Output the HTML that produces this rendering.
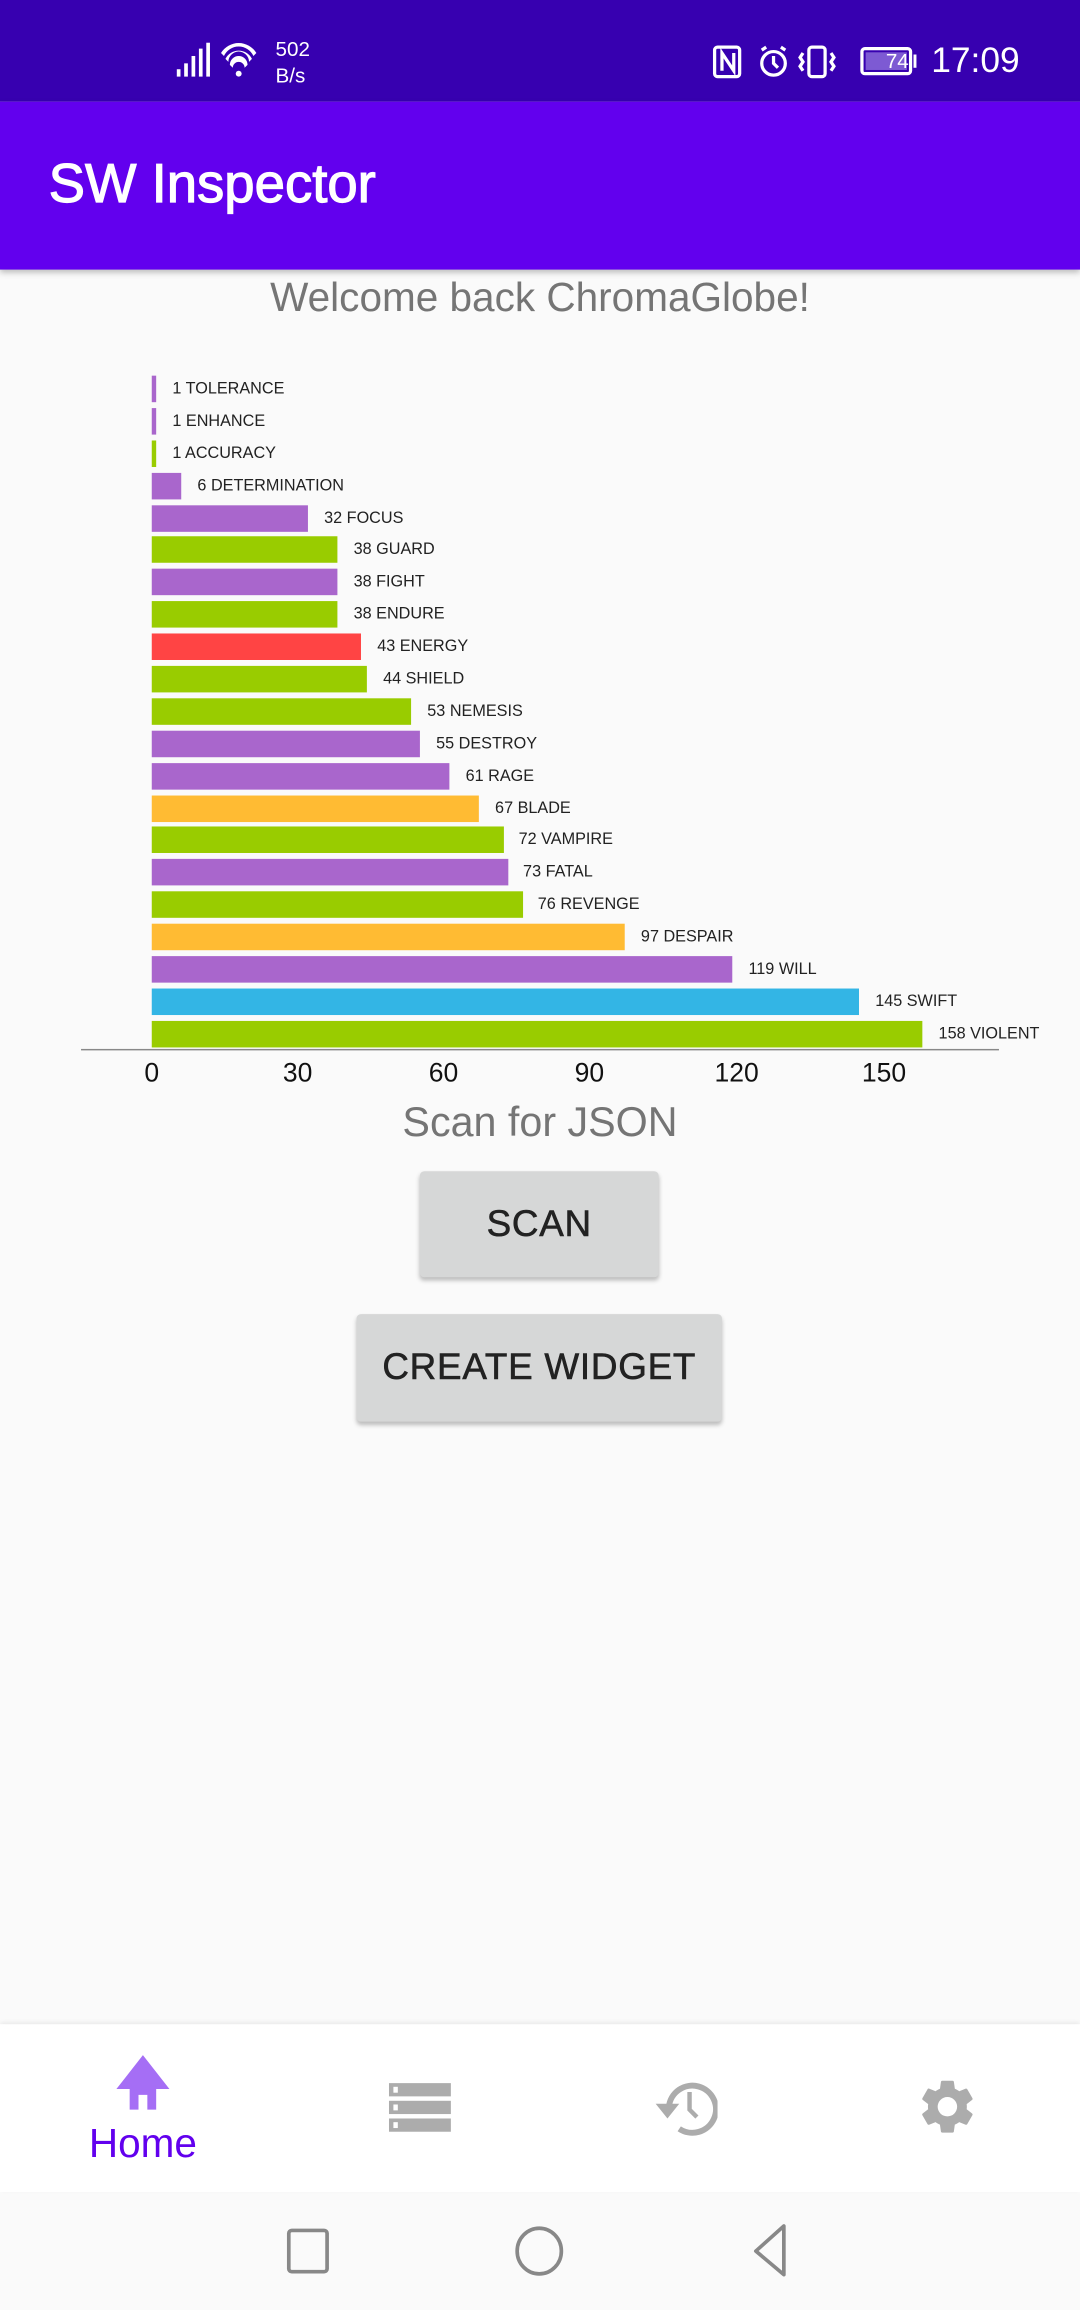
<!DOCTYPE html>
<html><head><meta charset="utf-8"><style>
html,body{margin:0;padding:0;width:1080px;height:2310px;overflow:hidden;background:#fafafa;font-family:"Liberation Sans",sans-serif}
#w{position:absolute;left:0;top:0;width:733px;height:1568px;transform:scale(1.47340,1.47321);transform-origin:0 0;background:#fafafa}
.a{position:absolute}
.bar{position:absolute;left:103px;height:18px}
.lb{position:absolute;font-size:11px;color:#222;line-height:18px;white-space:nowrap}
.tk{position:absolute;top:718px;font-size:18px;color:#111;width:60px;text-align:center;margin-left:-30px}
.btn{position:absolute;background:#d6d7d7;border-radius:3px;box-shadow:0 2px 3px rgba(0,0,0,.25);font-size:25px;color:#222;text-align:center;letter-spacing:.5px;-webkit-text-stroke:0.4px #222}
</style></head><body><div id="w">
<div class="a" style="left:0;top:0;width:733px;height:69px;background:#3700b0"></div>
<svg class="a" style="left:118px;top:28px" width="62" height="26" viewBox="0 0 62 26" fill="#fff">
<rect x="2" y="19" width="2.5" height="5"/><rect x="7" y="15" width="2.5" height="9"/><rect x="12" y="10" width="2.5" height="14"/><rect x="17" y="5" width="2.5" height="19"/><rect x="22" y="1" width="2.5" height="23"/>
<path d="M32 8 a14 14 0 0 1 24 0 l-2 2 a11 11 0 0 0 -20 0z M35 12 a10 10 0 0 1 18 0 l-2 2 a7 7 0 0 0 -14 0z M38 16 a6 6 0 0 1 12 0 l-2 2 a3 3 0 0 0 -8 0z"/><circle cx="44" cy="22" r="2"/></svg>
<div class="a" style="left:187px;top:24px;font-size:14px;color:#fff;line-height:18px">502<br>B/s</div>
<svg class="a" style="left:483px;top:30px" width="142" height="24" viewBox="0 0 142 24" fill="none" stroke="#fff" stroke-width="2.2">
<rect x="2" y="2" width="17" height="20" rx="2"/><path d="M7 18V6l8 12V6"/>
<circle cx="42" cy="13" r="8"/><path d="M42 8v5l3 3M34 4l3-2M50 4l-3-2"/>
<rect x="66" y="2" width="11" height="20" rx="2"/><path d="M62 6l-2 3 2 3-2 3 2 3M81 6l2 3-2 3 2 3-2 3"/>
<rect x="102" y="3" width="33" height="17" rx="2"/><rect x="104.5" y="5.5" width="28" height="12" fill="#7d5ad3" stroke="none"/><rect x="137" y="7" width="2" height="9" fill="#fff" stroke="none"/>
</svg>
<div class="a" style="left:591px;top:33px;width:36px;text-align:center;font-size:14px;color:#fff">74</div>
<div class="a" style="left:632px;top:28px;font-size:24px;color:#fff">17:09</div>
<div class="a" style="left:0;top:69px;width:733px;height:114px;background:#6200ee;box-shadow:0 2px 4px rgba(0,0,0,.25)"></div>
<div class="a" style="left:33px;top:104px;font-size:37px;color:#fff;-webkit-text-stroke:0.8px #fff">SW Inspector</div>
<div class="a" style="left:0;top:186px;width:733px;text-align:center;font-size:27.5px;color:#757575">Welcome back ChromaGlobe!</div>

<div class="bar" style="top:255px;width:3.3px;background:#a966cc"></div><div class="lb" style="top:255px;left:117px">1 TOLERANCE</div>
<div class="bar" style="top:277px;width:3.3px;background:#a966cc"></div><div class="lb" style="top:277px;left:117px">1 ENHANCE</div>
<div class="bar" style="top:299px;width:3.3px;background:#99cc00"></div><div class="lb" style="top:299px;left:117px">1 ACCURACY</div>
<div class="bar" style="top:321px;width:20px;background:#a966cc"></div><div class="lb" style="top:321px;left:134px">6 DETERMINATION</div>
<div class="bar" style="top:343px;width:106px;background:#a966cc"></div><div class="lb" style="top:343px;left:220px">32 FOCUS</div>
<div class="bar" style="top:364px;width:126px;background:#99cc00"></div><div class="lb" style="top:364px;left:240px">38 GUARD</div>
<div class="bar" style="top:386px;width:126px;background:#a966cc"></div><div class="lb" style="top:386px;left:240px">38 FIGHT</div>
<div class="bar" style="top:408px;width:126px;background:#99cc00"></div><div class="lb" style="top:408px;left:240px">38 ENDURE</div>
<div class="bar" style="top:430px;width:142px;background:#ff4444"></div><div class="lb" style="top:430px;left:256px">43 ENERGY</div>
<div class="bar" style="top:452px;width:146px;background:#99cc00"></div><div class="lb" style="top:452px;left:260px">44 SHIELD</div>
<div class="bar" style="top:474px;width:176px;background:#99cc00"></div><div class="lb" style="top:474px;left:290px">53 NEMESIS</div>
<div class="bar" style="top:496px;width:182px;background:#a966cc"></div><div class="lb" style="top:496px;left:296px">55 DESTROY</div>
<div class="bar" style="top:518px;width:202px;background:#a966cc"></div><div class="lb" style="top:518px;left:316px">61 RAGE</div>
<div class="bar" style="top:540px;width:222px;background:#ffbb33"></div><div class="lb" style="top:540px;left:336px">67 BLADE</div>
<div class="bar" style="top:561px;width:239px;background:#99cc00"></div><div class="lb" style="top:561px;left:352px">72 VAMPIRE</div>
<div class="bar" style="top:583px;width:242px;background:#a966cc"></div><div class="lb" style="top:583px;left:355px">73 FATAL</div>
<div class="bar" style="top:605px;width:252px;background:#99cc00"></div><div class="lb" style="top:605px;left:365px">76 REVENGE</div>
<div class="bar" style="top:627px;width:321px;background:#ffbb33"></div><div class="lb" style="top:627px;left:435px">97 DESPAIR</div>
<div class="bar" style="top:649px;width:394px;background:#a966cc"></div><div class="lb" style="top:649px;left:508px">119 WILL</div>
<div class="bar" style="top:671px;width:480px;background:#33b5e5"></div><div class="lb" style="top:671px;left:594px">145 SWIFT</div>
<div class="bar" style="top:693px;width:523px;background:#99cc00"></div><div class="lb" style="top:693px;left:637px">158 VIOLENT</div>
<div class="a" style="left:55px;top:712px;width:623px;height:1px;background:#888"></div>
<div class="tk" style="left:103px">0</div><div class="tk" style="left:202px">30</div><div class="tk" style="left:301px">60</div><div class="tk" style="left:400px">90</div><div class="tk" style="left:500px">120</div><div class="tk" style="left:600px">150</div>
<div class="a" style="left:0;top:746px;width:733px;text-align:center;font-size:28px;color:#757575">Scan for JSON</div>
<div class="btn" style="left:285px;top:795px;width:162px;height:72px;line-height:72px">SCAN</div>
<div class="btn" style="left:242px;top:892px;width:248px;height:73px;line-height:73px">CREATE WIDGET</div>

<div class="a" style="left:0;top:1374px;width:733px;height:114px;background:#fff;box-shadow:0 -1px 3px rgba(0,0,0,.08)"></div>
<svg class="a" style="left:77px;top:1394px" width="40" height="40" viewBox="0 0 40 40" fill="#a56ef5"><path d="M20 1L2 24h9v14h6V28h6v10h6V24h9z"/></svg>
<div class="a" style="left:47px;top:1439px;width:100px;text-align:center;font-size:27.5px;color:#6200ee">Home</div>
<svg class="a" style="left:263px;top:1412px" width="44" height="38" viewBox="0 0 44 38" fill="#acacac"><rect x="1" y="2" width="42" height="9"/><rect x="1" y="14" width="42" height="9"/><rect x="1" y="26" width="42" height="9"/><rect x="4" y="4.5" width="3" height="4" fill="#fff"/><rect x="4" y="16.5" width="3" height="4" fill="#fff"/><rect x="4" y="28.5" width="3" height="4" fill="#fff"/></svg>
<svg class="a" style="left:441px;top:1408px" width="46" height="46" viewBox="0 0 46 46" fill="none" stroke="#acacac" stroke-width="4"><path d="M13 22 A16 16 0 1 1 20 37"/><path d="M27 12v12l5 5" stroke-width="3"/><path d="M4 20h16l-8 10z" fill="#acacac" stroke="none"/></svg>
<svg class="a" style="left:621px;top:1408px" width="44" height="44" viewBox="0 0 24 24" fill="#acacac"><path d="M19.14 12.94c.04-.3.06-.61.06-.94s-.02-.64-.07-.94l2.030-1.58a.49.49 0 00.12-.61l-1.92-3.32a.49.49 0 00-.59-.22l-2.39.96c-.5-.38-1.030-.7-1.62-.94l-.36-2.54a.48.48 0 00-.48-.41h-3.84a.48.48 0 00-.47.41l-.36 2.54c-.59.24-1.13.57-1.62.94l-2.39-.96a.48.48 0 00-.59.22L2.74 8.87a.47.47 0 00.12.61l2.030 1.58c-.05.3-.09.63-.09.94s.02.64.07.94l-2.030 1.58a.49.49 0 00-.12.61l1.92 3.32c.12.22.37.29.59.22l2.39-.96c.5.38 1.030.7 1.62.94l.36 2.54c.05.24.24.41.48.41h3.84c.24 0 .44-.17.47-.41l.36-2.54c.59-.24 1.13-.56 1.62-.94l2.39.96c.22.08.47 0 .59-.22l1.92-3.32a.47.47 0 00-.12-.61l-2.010-1.58zM12 15.6A3.6 3.6 0 1112 8.4a3.6 3.6 0 010 7.2z"/></svg>
<svg class="a" style="left:190px;top:1508px" width="360" height="40" viewBox="0 0 360 40" fill="none" stroke="#888" stroke-width="2.5"><rect x="6" y="6" width="26" height="28" rx="2"/><ellipse cx="176" cy="20" rx="15" ry="15.5"/><path d="M342 3v33L323 20z" stroke-linejoin="round"/></svg>
</div></body></html>
